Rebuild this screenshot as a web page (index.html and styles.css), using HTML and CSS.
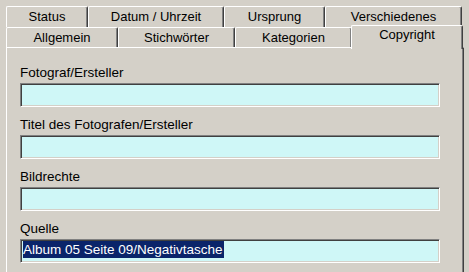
FILE: index.html
```html
<!DOCTYPE html>
<html lang="de">
<head>
    <meta charset="UTF-8">
    <title>Eigenschaften - Copyright</title>
    <link rel="stylesheet" href="styles.css">
</head>
<body>
    <div class="dialog">
        <div class="tab-row row-back">
            <div class="tab w-status">Status</div>
            <div class="tab w-datum">Datum / Uhrzeit</div>
            <div class="tab w-ursprung">Ursprung</div>
            <div class="tab w-versch">Verschiedenes</div>
        </div>
        <div class="tab-row row-front">
            <div class="tab w-allg">Allgemein</div>
            <div class="tab w-stich">Stichwörter</div>
            <div class="tab w-kat">Kategorien</div>
            <div class="tab tab-active w-copy">Copyright</div>
        </div>

        <div class="panel">
            <div class="field-group">
                <label class="field-label">Fotograf/Ersteller</label>
                <div class="field"></div>
            </div>
            <div class="field-group">
                <label class="field-label">Titel des Fotografen/Ersteller</label>
                <div class="field"></div>
            </div>
            <div class="field-group">
                <label class="field-label">Bildrechte</label>
                <div class="field"></div>
            </div>
            <div class="field-group">
                <label class="field-label">Quelle</label>
                <div class="field"><span class="selected">Album 05 Seite 09/Negativtasche</span></div>
            </div>
        </div>
    </div>
</body>
</html>
```

FILE: styles.css
```css
body {
    margin: 0;
    background-color: #d4d0c8;
    font-family: "Liberation Sans", Arial, sans-serif;
    font-size: 13px;
    color: #000;
    overflow: hidden;
}
.dialog {
    padding: 6px 5px 0 6px;
}
.tab-row {
    display: flex;
}
.row-back {
    height: 21px;
}
.row-front {
    height: 20px;
}
.tab {
    box-sizing: border-box;
    height: 100%;
    border-top: 1px solid #fff;
    border-left: 1px solid #fff;
    border-right: 1px solid #404040;
    box-shadow: inset -1px 0 #808080;
    border-radius: 2px 2px 0 0;
    text-align: center;
    line-height: 19px;
}
.tab-active {
    position: relative;
    z-index: 1;
    height: 24px;
    margin-top: -2px;
    margin-left: -1px;
    background-color: #d4d0c8;
    line-height: 18px;
}
.w-status { width: 82px; }
.w-datum { width: 136px; }
.w-ursprung { width: 101px; }
.w-versch { width: 137px; }
.w-allg { width: 112px; }
.w-stich { width: 117px; }
.w-kat { width: 117px; }
.w-copy { width: 112px; }

.panel {
    box-sizing: border-box;
    height: 225px;
    padding: 17px 0 0 13px;
    border-top: 1px solid #fff;
    border-left: 1px solid #fff;
    border-right: 1px solid #404040;
    box-shadow: inset -1px 0 #808080;
    font-size: 13.5px;
}
.field-group {
    margin-bottom: 10px;
}
.field-label {
    display: block;
    height: 16px;
    line-height: 16px;
    margin-bottom: 2px;
}
.field {
    box-sizing: border-box;
    width: 420px;
    height: 24px;
    padding: 1px 0 0 1px;
    background-color: #cff7f7;
    border-top: 1px solid #808080;
    border-left: 1px solid #808080;
    border-bottom: 1px solid #fff;
    border-right: 1px solid #fff;
    box-shadow: inset 1px 1px #404040, inset -1px -1px #d4d0c8;
    line-height: 17px;
}
.selected {
    display: inline-block;
    margin-left: 1px;
    padding-right: 1px;
    background-color: #0a246a;
    color: #fff;
}
```
